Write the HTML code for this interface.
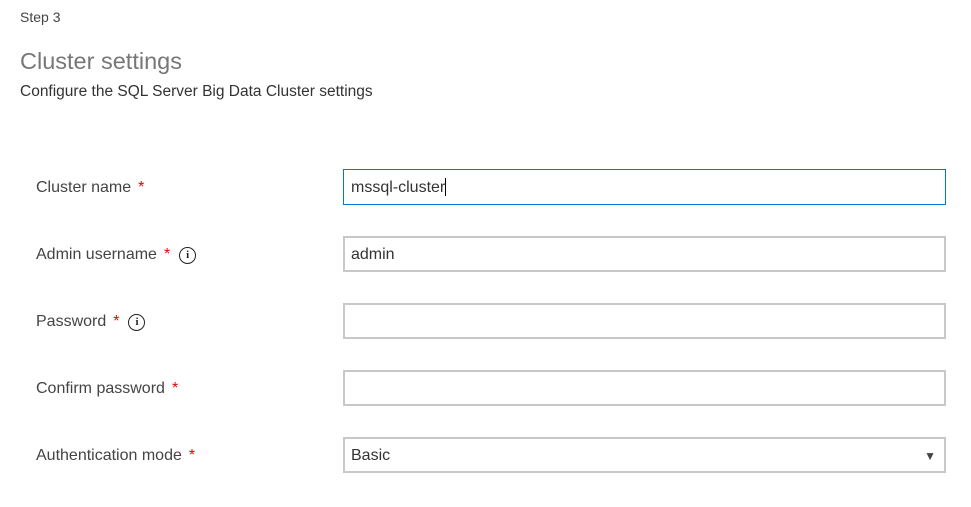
<!DOCTYPE html>
<html><head><style>
body{margin:0;background:#fff;font-family:"Liberation Sans",sans-serif;color:#333;width:971px;height:507px;position:relative;overflow:hidden}
.a{position:absolute;white-space:nowrap}
.lbl{position:absolute;left:36px;font-size:16px;color:#444;line-height:20px;display:flex;align-items:center}
.st{color:#e00;margin-left:7px}
.box{position:absolute;left:343px;width:603px;height:36px;border:2px solid #c8c8c8;background:#fff;font-size:16px;line-height:34px;padding-left:6px;box-sizing:border-box;color:#333}
.info{display:inline-block;width:15px;height:15px;border:1.5px solid #222;border-radius:50%;font-size:11px;line-height:15px;text-align:center;font-weight:bold;margin-left:9px;font-family:"Liberation Serif",serif;color:#222}
</style></head><body>
<div class="a" style="left:20px;top:9px;font-size:14px;color:#444">Step 3</div>
<div class="a" style="left:20px;top:48px;font-size:23.5px;color:#777">Cluster settings</div>
<div class="a" style="left:20px;top:83px;font-size:15.5px;color:#333">Configure the SQL Server Big Data Cluster settings</div>

<div class="lbl" style="top:178px">Cluster name<span class="st">*</span></div>
<div class="box" style="top:169px;border:1px solid #0078d4;line-height:36px;padding-left:7px">mssql-cluster<span style="display:inline-block;width:1px;height:18px;background:#000;vertical-align:-4px"></span></div>

<div class="lbl" style="top:245px">Admin username<span class="st">*</span><span class="info">i</span></div>
<div class="box" style="top:236px">admin</div>

<div class="lbl" style="top:312px">Password<span class="st">*</span><span class="info">i</span></div>
<div class="box" style="top:303px"></div>

<div class="lbl" style="top:379px">Confirm password<span class="st">*</span></div>
<div class="box" style="top:370px"></div>

<div class="lbl" style="top:446px">Authentication mode<span class="st">*</span></div>
<div class="box" style="top:437px">Basic<span style="position:absolute;right:8px;top:0;font-size:12px;color:#444">▼</span></div>
</body></html>
